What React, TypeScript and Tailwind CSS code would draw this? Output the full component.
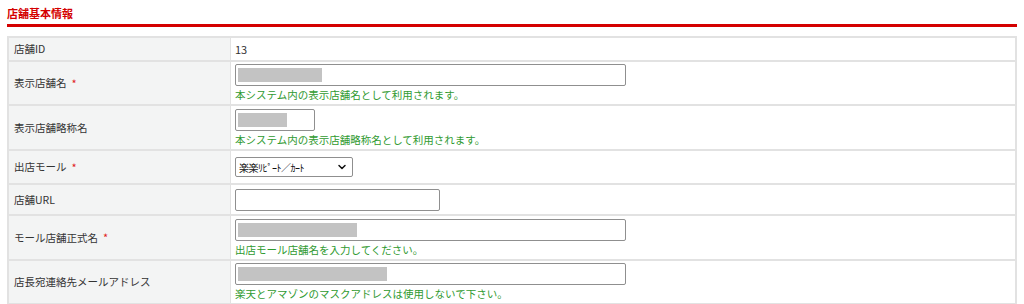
import { ChevronDown } from 'lucide-react';

const font = { fontFamily: '"Noto Sans CJK JP", "Noto Sans", sans-serif' };

type Row = {
  label: string;
  required?: boolean;
  height: string;
  content: React.ReactNode;
};

function TextBox({ width, fill }: { width: string; fill?: string }) {
  return (
    <div className={`${width} h-[22px] bg-white border border-[#8f8f8f] rounded-[2px] flex items-center px-[2px]`}>
      {fill && <div className={`${fill} h-[14px] bg-[#c3c3c3]`} />}
    </div>
  );
}

function Hint({ children }: { children: React.ReactNode }) {
  return <div className="text-[10.5px] leading-[14px] text-[#2f9a2f] mt-[2px]">{children}</div>;
}

const rows: Row[] = [
  { label: '店舗ID', height: 'h-[24px]', content: <span className="text-[11px] text-[#333]">13</span> },
  {
    label: '表示店舗名',
    required: true,
    height: 'h-[44px]',
    content: (
      <>
        <TextBox width="w-[391px]" fill="w-[84px]" />
        <Hint>本システム内の表示店舗名として利用されます。</Hint>
      </>
    ),
  },
  {
    label: '表示店舗略称名',
    height: 'h-[45px]',
    content: (
      <>
        <TextBox width="w-[80px]" fill="w-[49px]" />
        <Hint>本システム内の表示店舗略称名として利用されます。</Hint>
      </>
    ),
  },
  {
    label: '出店モール',
    required: true,
    height: 'h-[34px]',
    content: (
      <div className="w-[118px] h-[20px] bg-white border border-[#8f8f8f] rounded-[2px] flex items-center justify-between pl-[3px] pr-[4px]">
        <span className="text-[10px] text-[#111] tracking-[-0.5px]">楽楽ﾘﾋﾟｰﾄ／ｶｰﾄ</span>
        <ChevronDown className="w-3 h-3 text-[#111]" strokeWidth={3} />
      </div>
    ),
  },
  { label: '店舗URL', height: 'h-[31px]', content: <TextBox width="w-[205px]" /> },
  {
    label: 'モール店舗正式名',
    required: true,
    height: 'h-[45px]',
    content: (
      <>
        <TextBox width="w-[391px]" fill="w-[119px]" />
        <Hint>出店モール店舗名を入力してください。</Hint>
      </>
    ),
  },
  {
    label: '店長宛連絡先メールアドレス',
    height: 'h-[44px]',
    content: (
      <>
        <TextBox width="w-[391px]" fill="w-[149px]" />
        <Hint>楽天とアマゾンのマスクアドレスは使用しないで下さい。</Hint>
      </>
    ),
  },
];

export default function App() {
  return (
    <div className="w-[1024px] h-[304px] bg-white px-[7px] overflow-hidden" style={font}>
      <div className="pt-[5px] h-[24px] text-[11px] font-bold text-[#d40000] leading-[16px]">店舗基本情報</div>
      <div className="h-[3px] bg-[#d40000]" />
      <div className="mt-[9px] border-2 border-[#e2e2e2] border-b-0">
        {rows.map((r) => (
          <div key={r.label} className={`flex ${r.height} border-b-2 border-[#e2e2e2]`}>
            <div className="w-[222px] shrink-0 bg-[#f3f4f4] border-r border-[#e2e2e2] flex items-center pl-[5px] text-[10.5px] text-[#333]">
              {r.label}
              {r.required && <span className="text-[#e02020] ml-[5px] text-[11px]">*</span>}
            </div>
            <div className="flex-1 flex flex-col justify-center pl-[4px]">{r.content}</div>
          </div>
        ))}
      </div>
    </div>
  );
}
